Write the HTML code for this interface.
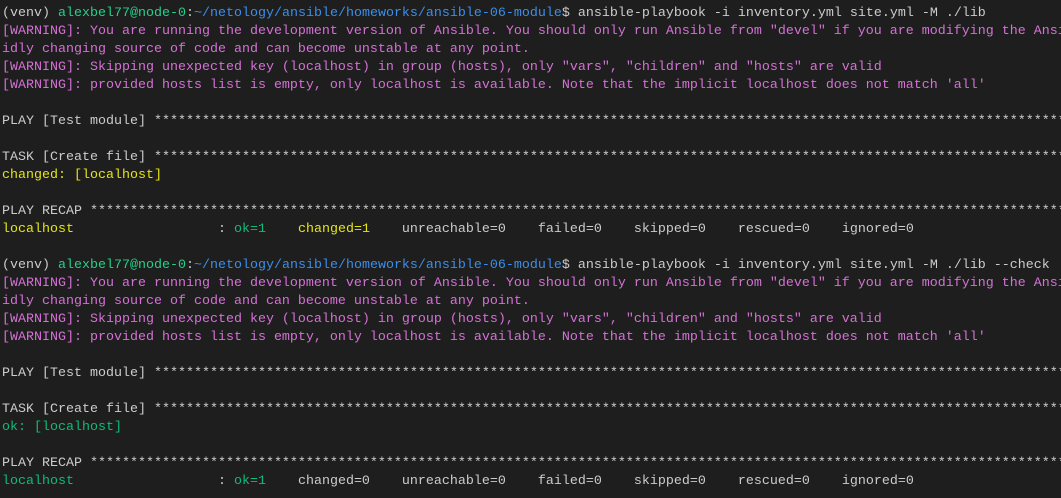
<!DOCTYPE html>
<html><head><meta charset="utf-8"><style>
html,body{margin:0;padding:0;background:#1e1e1e;width:1061px;height:498px;overflow:hidden}
pre{margin:0;padding:5px 0 0 2px;font-family:"Liberation Mono",monospace;font-size:13.33px;line-height:18px;color:#cccccc;white-space:pre;overflow:hidden}
.g{color:#23d18b}.b{color:#3b8eea}
.m{color:#d670d6}.y{color:#e5e510}.o{color:#0dbc79}
</style></head><body><pre>(venv) <span class="g">alexbel77@node-0</span>:<span class="b">~/netology/ansible/homeworks/ansible-06-module</span>$ ansible-playbook -i inventory.yml site.yml -M ./lib
<span class="m">[WARNING]: You are running the development version of Ansible. You should only run Ansible from "devel" if you are modifying the Ansible engine, or trying out features under development. This is a rap</span>
<span class="m">idly changing source of code and can become unstable at any point.</span>
<span class="m">[WARNING]: Skipping unexpected key (localhost) in group (hosts), only "vars", "children" and "hosts" are valid</span>
<span class="m">[WARNING]: provided hosts list is empty, only localhost is available. Note that the implicit localhost does not match 'all'</span>

PLAY [Test module] ****************************************************************************************************************************

TASK [Create file] ****************************************************************************************************************************
<span class="y">changed: [localhost]</span>

PLAY RECAP ************************************************************************************************************************************
<span class="y">localhost</span>                  : <span class="o">ok=1   </span> <span class="y">changed=1   </span> unreachable=0    failed=0    skipped=0    rescued=0    ignored=0

(venv) <span class="g">alexbel77@node-0</span>:<span class="b">~/netology/ansible/homeworks/ansible-06-module</span>$ ansible-playbook -i inventory.yml site.yml -M ./lib --check
<span class="m">[WARNING]: You are running the development version of Ansible. You should only run Ansible from "devel" if you are modifying the Ansible engine, or trying out features under development. This is a rap</span>
<span class="m">idly changing source of code and can become unstable at any point.</span>
<span class="m">[WARNING]: Skipping unexpected key (localhost) in group (hosts), only "vars", "children" and "hosts" are valid</span>
<span class="m">[WARNING]: provided hosts list is empty, only localhost is available. Note that the implicit localhost does not match 'all'</span>

PLAY [Test module] ****************************************************************************************************************************

TASK [Create file] ****************************************************************************************************************************
<span class="o">ok: [localhost]</span>

PLAY RECAP ************************************************************************************************************************************
<span class="o">localhost</span>                  : <span class="o">ok=1   </span> changed=0    unreachable=0    failed=0    skipped=0    rescued=0    ignored=0
</pre></body></html>
